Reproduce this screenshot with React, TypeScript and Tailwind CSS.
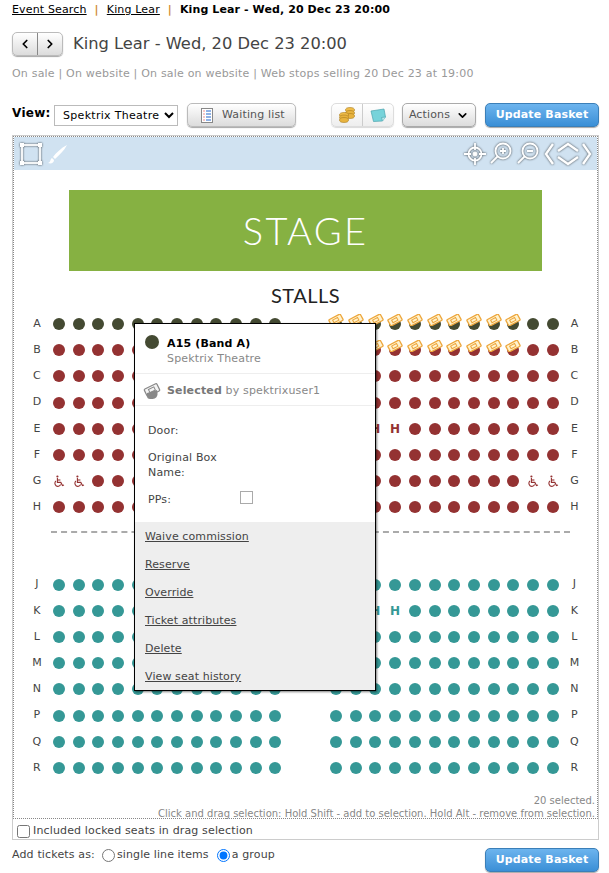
import { ChevronLeft, ChevronRight, ChevronDown } from "lucide-react";

type Tone = "dark" | "red" | "teal";

const FONT = "font-['DejaVu_Sans','Liberation_Sans',sans-serif]";

const TONE_BG: Record<Tone, string> = {
  dark: "bg-[#444a32]",
  red: "bg-[#943232]",
  teal: "bg-[#359896]",
};

const TONE_TEXT: Record<Tone, string> = {
  dark: "text-[#444a32]",
  red: "text-[#943232]",
  teal: "text-[#359896]",
};

// left and right block overrides per row, seat index -> kind
interface RowDef {
  label: string;
  tone: Tone;
  left?: Record<number, string>;
  right?: Record<number, string>;
  ticketsRight?: boolean;
}

const WHEEL = "wheel";
const HOUSE = "H";

const UPPER: RowDef[] = [
  { label: "A", tone: "dark", ticketsRight: true },
  { label: "B", tone: "red", ticketsRight: true },
  { label: "C", tone: "red" },
  { label: "D", tone: "red" },
  { label: "E", tone: "red", right: { 2: HOUSE, 3: HOUSE } },
  { label: "F", tone: "red" },
  {
    label: "G",
    tone: "red",
    left: { 0: WHEEL, 1: WHEEL },
    right: { 10: WHEEL, 11: WHEEL },
  },
  { label: "H", tone: "red" },
];

const LOWER: RowDef[] = [
  { label: "J", tone: "teal" },
  { label: "K", tone: "teal", right: { 2: HOUSE, 3: HOUSE } },
  { label: "L", tone: "teal" },
  { label: "M", tone: "teal" },
  { label: "N", tone: "teal" },
  { label: "P", tone: "teal" },
  { label: "Q", tone: "teal" },
  { label: "R", tone: "teal" },
];

const POPUP_LINKS = [
  "Waive commission",
  "Reserve",
  "Override",
  "Ticket attributes",
  "Delete",
  "View seat history",
];

function TicketIcon({ className }: { className?: string }) {
  return (
    <svg viewBox="0 0 16 12" className={className} aria-hidden="true">
      <g transform="rotate(-28 8 6)">
        <rect x="1.5" y="2.5" width="13" height="7" rx="1" fill="#fff3cf" stroke="#eda63c" strokeWidth="1.3" />
        <rect x="5" y="4.5" width="5.5" height="3" fill="none" stroke="#eda63c" strokeWidth="1" />
      </g>
    </svg>
  );
}

function WheelIcon({ className }: { className?: string }) {
  return (
    <svg viewBox="0 0 12 13" fill="none" stroke="currentColor" strokeWidth="1.1" className={className} aria-hidden="true">
      <circle cx="4.4" cy="1.5" r="1.1" fill="currentColor" stroke="none" />
      <path d="M4.4 3v4.4h3.4l1.7 3.2 1.5-.6" />
      <path d="M4.4 5h3" />
      <path d="M3 6a3 3 0 1 0 4.6 3.6" />
    </svg>
  );
}

function Seat({ tone, kind, ticket }: { tone: Tone; kind?: string; ticket?: boolean }) {
  return (
    <div className="relative flex h-full w-[19.7px] shrink-0 items-center justify-center">
      {kind === WHEEL ? (
        <WheelIcon className={`h-[13px] w-[12px] ${TONE_TEXT[tone]}`} />
      ) : kind === HOUSE ? (
        <span className={`text-[12px] font-bold leading-none ${TONE_TEXT[tone]}`}>H</span>
      ) : (
        <div className={`h-3 w-3 rounded-full ${TONE_BG[tone]}`} />
      )}
      {ticket && <TicketIcon className="absolute left-[2px] top-[3px] h-[12px] w-[16px]" />}
    </div>
  );
}

function SeatRow({ row }: { row: RowDef }) {
  return (
    <div className="flex h-[26.2px] items-center text-[11px] text-[#444]">
      <div className="w-6 shrink-0 text-center">{row.label}</div>
      <div className="flex h-full">
        {Array.from({ length: 12 }, (_, i) => (
          <Seat key={i} tone={row.tone} kind={row.left?.[i]} />
        ))}
      </div>
      <div className="h-full w-[41px] shrink-0" />
      <div className="flex h-full">
        {Array.from({ length: 12 }, (_, i) => (
          <Seat key={i} tone={row.tone} kind={row.right?.[i]} ticket={row.ticketsRight && i < 10} />
        ))}
      </div>
      <div className="w-6 shrink-0 text-center">{row.label}</div>
    </div>
  );
}

function UpdateBasket() {
  return (
    <button className="h-6 w-[114px] rounded-[5px] border border-[#3b7fb8] bg-gradient-to-b from-[#6cb4ee] to-[#3a8fd6] pt-px text-[11px] font-bold text-white shadow-[0_1px_1px_rgba(0,0,0,0.35)]">
      Update Basket
    </button>
  );
}

function ToolIcon({ children, w = 24 }: { children: React.ReactNode; w?: number }) {
  return (
    <svg
      viewBox={`0 0 ${w} 24`}
      width={w}
      height={24}
      fill="none"
      stroke="#fff"
      strokeWidth="1.8"
      className="drop-shadow-[0_0_1px_rgba(0,0,0,0.7)]"
      aria-hidden="true"
    >
      {children}
    </svg>
  );
}

function SeatPopup() {
  return (
    <div className="absolute left-[120px] top-[186px] z-10 w-[242px] border border-black bg-white text-[11px] text-[#444] shadow-[1px_1px_2px_rgba(0,0,0,0.5)]">
      <div className="flex h-[50px] items-start border-b border-[#eee] pl-[10px] pt-[12px]">
        <div className="-mt-[1px] h-[14px] w-[14px] rounded-full bg-[#444a32]" />
        <div className="ml-[8px] leading-[15px]">
          <div className="font-bold text-black">A15 (Band A)</div>
          <div className="text-[#888]">Spektrix Theatre</div>
        </div>
      </div>
      <div className="flex h-[32px] items-center border-b border-[#eee] pl-[8px] pt-[3px] text-[#888]">
        <svg viewBox="0 0 18 18" className="h-[18px] w-[18px] shrink-0" aria-hidden="true">
          <g transform="rotate(-26 9 8)">
            <rect x="2" y="4" width="14" height="8" rx="1" fill="#f4f4f4" stroke="#888" strokeWidth="1.2" />
            <rect x="6" y="6" width="6" height="3.5" fill="none" stroke="#888" />
          </g>
          <path d="M4 11l10-3 .5 3a5 5 0 0 1-5 6H7a3 3 0 0 1-3-3z" fill="#888" />
        </svg>
        <span className="ml-[6px]">
          <span className="font-bold text-[#777]">Selected</span> by spektrixuser1
        </span>
      </div>
      <div className="h-[116px] pl-[13px] pt-[17px]">
        <div className="h-[12px] leading-[15px]">Door:</div>
        <div className="mt-[15px] w-[90px] leading-[15px]">Original Box Name:</div>
        <div className="mt-[12px] flex items-center">
          <span className="w-[92px] leading-[15px]">PPs:</span>
          <span className="-mt-[4px] h-[13px] w-[13px] border border-[#aaa] bg-white" />
        </div>
      </div>
      <div className="flex h-[168px] flex-col bg-[#eee] pl-[10px] pt-[1px] tracking-[0.1px]">
        {POPUP_LINKS.map((l) => (
          <a key={l} href="#" className="h-[28px] leading-[28px] underline">
            {l}
          </a>
        ))}
      </div>
    </div>
  );
}

export default function App() {
  return (
    <div className={`${FONT} h-[873px] w-[609px] overflow-hidden bg-white pl-3 pr-[10px] pt-[2px] text-[11px] tracking-[0.15px] text-[#444]`}>
      {/* Breadcrumb */}
      <div className="flex h-[17px] items-center text-black">
        <a href="#" className="underline">Event Search</a>
        <span className="mx-[8px] font-bold text-[#d08a35]">|</span>
        <a href="#" className="underline">King Lear</a>
        <span className="mx-[8px] font-bold text-[#d08a35]">|</span>
        <b className="tracking-[0.1px]">King Lear - Wed, 20 Dec 23 20:00</b>
      </div>

      {/* Title */}
      <div className="mt-[13px] flex h-6 items-center">
        <div className="flex h-6 w-[51px] items-center rounded-[5px] border border-[#bbb] bg-gradient-to-b from-white to-[#dcdcdc] shadow-[0_1px_1px_rgba(0,0,0,0.35)]">
          <div className="flex h-full flex-1 items-center justify-center border-r border-[#888]">
            <ChevronLeft size={14} strokeWidth={3} className="text-black" />
          </div>
          <div className="flex h-full flex-1 items-center justify-center">
            <ChevronRight size={14} strokeWidth={3} className="text-black" />
          </div>
        </div>
        <h1 className="ml-[10px] text-[16.3px] font-normal tracking-normal text-[#444]">King Lear - Wed, 20 Dec 23 20:00</h1>
      </div>

      <div className="mt-[10px] h-[15px] leading-[15px] tracking-[0.2px] text-[#999]">
        On sale | On website | On sale on website | Web stops selling 20 Dec 23 at 19:00
      </div>

      {/* Toolbar */}
      <div className="mt-[22px] flex h-6 items-center">
        <span className="-mt-1 w-[38px] text-[12px] font-bold tracking-[0.3px] text-black">View:</span>
        <select className="ml-[4px] h-[21px] w-[124px] border border-[#bbb] bg-white pl-[4px] text-[11px] tracking-[0.3px] text-black">
          <option>Spektrix Theatre</option>
        </select>
        <button className="ml-[9px] flex h-6 w-[109px] items-center rounded-[5px] border border-[#bbb] bg-gradient-to-b from-white to-[#dcdcdc] pl-[13px] text-[#555] shadow-[0_1px_1px_rgba(0,0,0,0.35)]">
          <svg viewBox="0 0 12 15" className="h-[15px] w-3" aria-hidden="true">
            <rect x="0.5" y="0.5" width="11" height="14" fill="#fff" stroke="#888" />
            <path d="M2.5 3h1M2.5 6h1M2.5 9h1M2.5 12h1" stroke="#d22" />
            <path d="M5 3h5M5 6h5M5 9h5M5 12h5" stroke="#26c" />
          </svg>
          <span className="ml-[9px] pt-px">Waiting list</span>
        </button>
        <div className="ml-[35px] flex h-6 w-[63px] items-center rounded-[5px] border border-[#ddd] bg-gradient-to-b from-white to-[#eee] shadow-[0_1px_1px_rgba(0,0,0,0.15)]">
          <div className="flex h-full flex-1 items-center justify-center border-r border-[#ccc]">
            <svg viewBox="0 0 18 16" className="h-4 w-[18px]" aria-hidden="true">
              <ellipse cx="12" cy="3" rx="4.5" ry="2.5" fill="#f0bd4a" stroke="#a97c1e" strokeWidth="0.6" />
              <ellipse cx="12" cy="6" rx="4.5" ry="2.5" fill="#e8b33e" stroke="#a97c1e" strokeWidth="0.6" />
              <ellipse cx="12" cy="9" rx="4.5" ry="2.5" fill="#e8b33e" stroke="#a97c1e" strokeWidth="0.6" />
              <ellipse cx="6" cy="8" rx="4.5" ry="2.5" fill="#f0bd4a" stroke="#a97c1e" strokeWidth="0.6" />
              <ellipse cx="6" cy="10.5" rx="4.5" ry="2.5" fill="#e8b33e" stroke="#a97c1e" strokeWidth="0.6" />
              <ellipse cx="6" cy="13" rx="4.5" ry="2.5" fill="#e8b33e" stroke="#a97c1e" strokeWidth="0.6" />
            </svg>
          </div>
          <div className="flex h-full flex-1 items-center justify-center">
            <svg viewBox="0 0 16 14" className="h-[14px] w-4" aria-hidden="true">
              <path d="M1 3l13-2 1.5 8-3 4-9 0.5z" fill="#77d3da" stroke="#4aa3ad" strokeWidth="0.7" />
              <path d="M12.5 13l-1-3.5 4-.5" fill="#b9e8ec" stroke="#4aa3ad" strokeWidth="0.6" />
            </svg>
          </div>
        </div>
        <button className="ml-2 flex h-6 w-[74px] items-center justify-center rounded-[5px] border border-[#aaa] bg-gradient-to-b from-white to-[#dcdcdc] pt-px text-[#555] shadow-[0_1px_1px_rgba(0,0,0,0.35)]">
          Actions
          <ChevronDown size={13} strokeWidth={3} className="ml-[6px] text-black" />
        </button>
        <div className="ml-[9px]">
          <UpdateBasket />
        </div>
      </div>

      {/* Seat map */}
      <div className="mt-[8px] border border-[#ccc]">
        <div className="relative h-[683px] border border-dotted border-[#888]">
          <div className="flex h-[33px] items-center justify-between bg-[#d0e2f1] pl-[5px] pr-[5px]">
            <div className="flex items-center gap-[4px]">
              <ToolIcon>
                <rect x="3" y="3" width="18" height="18" />
                <rect x="1.5" y="1.5" width="3" height="3" fill="#fff" strokeWidth="1" />
                <rect x="19.5" y="1.5" width="3" height="3" fill="#fff" strokeWidth="1" />
                <rect x="1.5" y="19.5" width="3" height="3" fill="#fff" strokeWidth="1" />
                <rect x="19.5" y="19.5" width="3" height="3" fill="#fff" strokeWidth="1" />
              </ToolIcon>
              <svg viewBox="0 0 20 20" width={20} height={20} aria-hidden="true">
                <path d="M20 1C14 4 9 9 6 13l2 2c4-4 9-8 12-14zM5 14c-2 1-1 4-4 5 3 1 6 0 6-3z" fill="#fff" />
              </svg>
            </div>
            <div className="flex items-center">
              <ToolIcon>
                <circle cx="12" cy="12" r="6.5" />
                <circle cx="12" cy="12" r="2" fill="#fff" strokeWidth="1" />
                <path d="M12 1v7M12 16v7M1 12h7M16 12h7" />
              </ToolIcon>
              <div className="ml-[2px]">
                <ToolIcon>
                  <circle cx="14" cy="9" r="7.5" />
                  <path d="M11 9h6M14 6v6M8.5 14.5L2 21" />
                </ToolIcon>
              </div>
              <div className="ml-[3px]">
                <ToolIcon>
                  <circle cx="14" cy="9" r="7.5" />
                  <path d="M11 9h6M8.5 14.5L2 21" />
                </ToolIcon>
              </div>
              <div className="ml-[4px]">
                <ToolIcon w={12}>
                  <path d="M9 2L2 12l7 10" strokeWidth="2.4" />
                </ToolIcon>
              </div>
              <ToolIcon>
                <path d="M2 9l10-7 10 7M2 15l10 7 10-7" strokeWidth="2.4" />
              </ToolIcon>
              <ToolIcon w={12}>
                <path d="M3 2l7 10-7 10" strokeWidth="2.4" />
              </ToolIcon>
            </div>
          </div>

          <div className="ml-[55px] mt-[20px] flex h-[81px] w-[473px] items-center justify-center bg-[#86b142] font-['Lato',sans-serif] text-[38px] font-light tracking-[2.3px] text-white">
            STAGE
          </div>
          <div className="mt-[12px] h-[24px] text-center font-['Lato',sans-serif] text-[20px] leading-[24px] tracking-[0.5px] text-[#222]">
            STALLS
          </div>

          <div className="ml-[11px] mt-[4px] w-[566px]">
            {UPPER.map((r) => (
              <SeatRow key={r.label} row={r} />
            ))}
            <div className="mb-[38.6px] ml-[26px] mt-[10.5px] w-[519px] border-t-2 border-dashed border-[#aaa]" />
            {LOWER.map((r) => (
              <SeatRow key={r.label} row={r} />
            ))}
          </div>

          <div className="absolute -bottom-[2px] right-[2px] text-right text-[10px] leading-[13px] tracking-normal text-[#888]">
            <div>20 selected.</div>
            <div>Click and drag selection: Hold Shift - add to selection. Hold Alt - remove from selection.</div>
          </div>

          <SeatPopup />
        </div>
        <label className="flex h-[20px] items-center pl-[4px] pt-[5px] text-[#444]">
          <input type="checkbox" className="m-0 h-[13px] w-[13px]" />
          <span className="ml-[3px]">Included locked seats in drag selection</span>
        </label>
      </div>

      {/* Footer */}
      <div className="mt-[8px] flex h-6 items-start justify-between">
        <div className="flex h-[15px] items-center">
          <span className="w-[85px]">Add tickets as:</span>
          <input type="radio" name="as" className="m-0 ml-[5px] h-[13px] w-[13px]" />
          <span className="ml-[2px] tracking-[0.1px]">single line items</span>
          <input type="radio" name="as" defaultChecked className="m-0 ml-[8px] h-[13px] w-[13px]" />
          <span className="ml-[2px]">a group</span>
        </div>
        <UpdateBasket />
      </div>
    </div>
  );
}
